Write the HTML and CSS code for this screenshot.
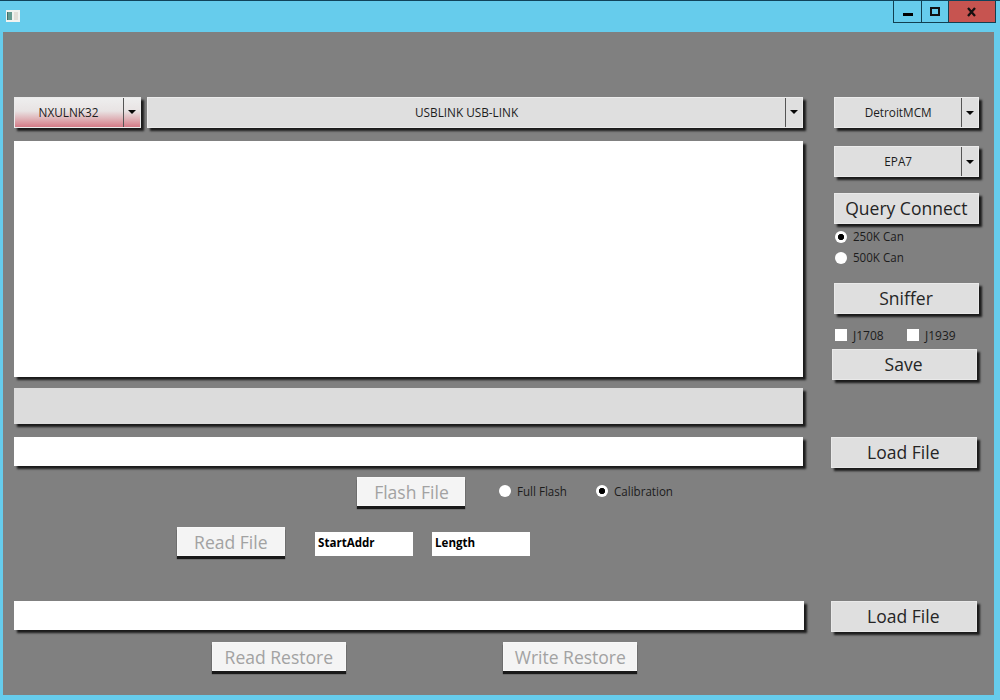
FILE: index.html
```html
<!DOCTYPE html>
<html lang="en"><head><meta charset="utf-8"><title>Flash Tool</title><link rel="stylesheet" href="styles.css"></head>
<body>
<div class="window">
<header class="titlebar">
<svg class="app-icon" width="15" height="12" viewBox="0 0 15 12"><path fill="#f1f3f0" d="M0 0h14v12H0z"/><path fill="#639b91" d="M1 2h5v8H1z"/><path fill="#446e69" d="M1 2h1v8H1z"/><path fill="#e2dfd8" d="M8 2h4v8H8z"/></svg>
<div class="controls"><span class="control min"><svg width="27" height="21"><path d="M9 12h10v3H9z"/></svg></span><span class="control max"><svg width="26" height="21"><path fill="none" stroke="#111" stroke-width="2" d="M9 7h8v7H9z"/></svg></span><span class="control close"><svg width="46" height="21"><path fill="none" stroke="#151010" stroke-width="2.3" d="m19 7 7 8m0-8-7 8"/></svg></span></div>
</header>
<main class="client">
<section class="left">
<div class="top-row">
<div class="combo adapter"><span class="combo-value"><span class="t t-small">NXULNK32</span></span><span class="drop"><i class="arrow"></i></span></div>
<div class="combo device"><span class="combo-value"><span class="t t-small">USBLINK USB-LINK</span></span><span class="drop"><i class="arrow"></i></span></div>
</div>
<div class="log raised"></div>
<div class="progress raised"></div>
<div class="path raised"></div>
<div class="flash-row">
<button class="btn off small"><span class="t t-big">Flash File</span></button>
<label class="opt full"><i class="radio"></i><span class="t t-opt">Full Flash</span></label>
<label class="opt"><i class="radio on"></i><span class="t t-opt">Calibration</span></label>
</div>
<div class="read-row">
<button class="btn off small"><span class="t t-big">Read File</span></button>
<div class="field start"><span class="t t-opt">StartAddr</span></div>
<div class="field"><span class="t t-opt">Length</span></div>
</div>
<div class="path second raised"></div>
<div class="restore-row">
<button class="btn off wide"><span class="t t-big">Read Restore</span></button>
<button class="btn off wide"><span class="t t-big">Write Restore</span></button>
</div>
</section>
<aside class="right">
<div class="combo ecu"><span class="combo-value"><span class="t t-small">DetroitMCM</span></span><span class="drop"><i class="arrow"></i></span></div>
<div class="combo epa"><span class="combo-value"><span class="t t-small">EPA7</span></span><span class="drop"><i class="arrow"></i></span></div>
<button class="btn query"><span class="t t-big">Query Connect</span></button>
<label class="opt can first"><i class="radio on"></i><span class="t t-opt">250K Can</span></label>
<label class="opt can"><i class="radio"></i><span class="t t-opt">500K Can</span></label>
<button class="btn sniffer"><span class="t t-big">Sniffer</span></button>
<div class="checks"><label class="opt"><i class="check"></i><span class="t">J1708</span></label><label class="opt"><i class="check"></i><span class="t">J1939</span></label></div>
<button class="btn save"><span class="t t-big">Save</span></button>
<button class="btn load"><span class="t t-big">Load File</span></button>
<button class="btn load two"><span class="t t-big">Load File</span></button>
</aside>
</main>
</div>
</body></html>
```
FILE: styles.css
```css
* { box-sizing: border-box; }
body { margin: 0; font-family: "Open Sans", "Noto Sans", sans-serif; font-size: 12px; color: #1c1c1c; }
.window { width: 1000px; height: 700px; overflow: hidden; background: #66ccec; border-top: 1px solid #10435a; display: flex; flex-direction: column; }
.titlebar { height: 31px; flex: none; display: flex; justify-content: space-between; padding: 0 4px 0 6px; }
.app-icon { margin-top: 9px; }
.controls { display: flex; height: 22px; border: 1px solid #123f50; border-top: 0; }
.control { display: flex; border-left: 1px solid #123f50; }
.control:first-child { border-left: 0; }
.close { background: #c75450; }
.client { margin: 0 6px 5px 3px; height: 663px; background: #808080; display: flex; padding: 65px 15px 0 11px; justify-content: space-between; }
.left { width: 791px; display: flex; flex-direction: column; }
.right { width: 148px; display: flex; flex-direction: column; }
.t { display: inline-block; white-space: nowrap; }
.t-small { transform: scaleX(.98); }
.t-big { transform: scaleX(.922); }
.t-opt { transform: scaleX(.965); transform-origin: left; }
.raised, .combo, .btn { box-shadow: 3px 3px 2px #1b1b1b; }
.top-row { display: flex; gap: 6px; }
.combo { display: flex; height: 31px; background: #dfdfdf; border: 1px solid #ebebeb; }
.combo-value { flex: 1; display: flex; align-items: center; justify-content: center; }
.top-row .combo-value { padding-bottom: 1px; }
.drop { width: 17px; border-left: 1px solid #555; display: flex; align-items: center; justify-content: center; }
.arrow { border: 4px solid transparent; border-top: 4.5px solid #080808; border-bottom: 0; }
.top-row .arrow { margin-bottom: 1px; }
.adapter { width: 127px; background: linear-gradient(#eee 0%, #e8e3e3 45%, #dfb2b7 72%, #d47b87 100%); }
.device { width: 656px; }
.log { height: 236px; width: 789px; margin-top: 13px; background: #fff; }
.progress { height: 36px; width: 789px; margin-top: 11px; background: #dcdcdc; }
.path { height: 29px; width: 789px; margin-top: 13px; background: #fff; }
.btn { border: 1px solid #e9e9e9; background: #dfdfdf; width: 145px; height: 31px; padding: 0 1px 1px 0; font: 19px "Open Sans", sans-serif; color: #252525; display: flex; align-items: center; justify-content: center; }
.btn.off { height: 29px; background: #f4f4f4; color: #a2a2a2; box-shadow: 0 3px 1px #191919; border-color: #f8f8f8; padding: 0; }
.small { width: 108px; }
.opt { display: flex; align-items: center; }
.radio { width: 12px; height: 12px; border-radius: 50%; background: #fff; margin-right: 6px; flex: none; }
.radio.on { background: radial-gradient(circle, #000 0 2.8px, #fff 3.5px); }
.check { width: 12px; height: 12px; background: #fff; margin-right: 6px; flex: none; }
.flash-row { display: flex; padding-left: 343px; margin-top: 11px; }
.flash-row .opt { padding-bottom: 1px; }
.full { margin-left: 34px; width: 97px; }
.read-row { display: flex; padding-left: 163px; margin-top: 21px; }
.field { width: 98px; height: 24px; margin: 5px 0 0 19px; background: #fff; font-weight: 700; padding: 2px 3px; color: #000; }
.field.start { margin-left: 30px; }
.path.second { margin-top: 45px; width: 790px; }
.restore-row { display: flex; padding-left: 198px; gap: 157px; margin-top: 12px; }
.wide { width: 134px; }
.right > .combo, .query, .sniffer { margin-left: 3px; width: 145px; }
.right > .combo { height: 31px; }
.epa { margin-top: 18px; }
.query { margin-top: 16px; }
.can { height: 21px; margin-left: 4px; }
.can.first { margin-top: 2px; }
.sniffer { margin-top: 15px; }
.checks { display: flex; margin: 15px 0 0 4px; height: 12px; }
.checks .opt { width: 72px; height: 12px; }
.save { margin: 8px 0 0 1px; }
.load { margin-top: 57px; width: 146px; }
.two { margin-top: 133px; }
```
